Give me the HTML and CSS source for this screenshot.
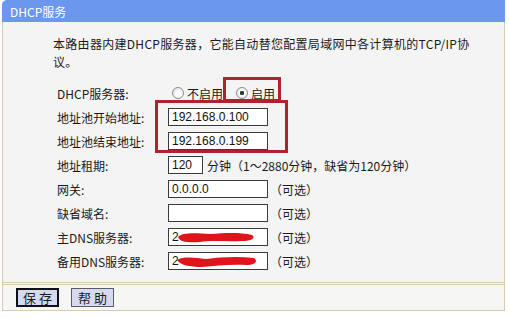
FILE: index.html
```html
<!DOCTYPE html>
<html lang="zh-CN">
<head>
<meta charset="utf-8">
<title>DHCP服务</title>
<link rel="stylesheet" href="styles.css">
</head>
<body>
<div class="panel">
  <div class="titlebar">DHCP服务</div>
  <div class="body">
    <p class="desc">本路由器内建DHCP服务器，它能自动替您配置局域网中各计算机的TCP/IP协<br>议。</p>
    <div class="form">
      <div class="label">DHCP服务器:</div>
      <div class="ctrl">
        <label class="radio"><input type="radio" name="dhcp"><span>不启用</span></label>
        <label class="radio"><input type="radio" name="dhcp" checked><span>启用</span></label>
      </div>
      <div class="label">地址池开始地址:</div>
      <div class="ctrl"><input class="field" type="text" value="192.168.0.100"></div>
      <div class="label">地址池结束地址:</div>
      <div class="ctrl"><input class="field" type="text" value="192.168.0.199"></div>
      <div class="label">地址租期:</div>
      <div class="ctrl"><input class="field short" type="text" value="120"><span class="hint lease">分钟（1～2880分钟，缺省为120分钟）</span></div>
      <div class="label">网关:</div>
      <div class="ctrl"><input class="field" type="text" value="0.0.0.0"><span class="hint">（可选）</span></div>
      <div class="label">缺省域名:</div>
      <div class="ctrl"><input class="field" type="text" value=""><span class="hint">（可选）</span></div>
      <div class="label">主DNS服务器:</div>
      <div class="ctrl"><span class="masked"><input class="field" type="text" value="2"><svg class="scribble" width="80" height="14" viewBox="0 0 80 14"><path d="M2 7 C6 2 20 3 34 4 C48 3 64 2 76 5 C80 8 76 11 66 11 C50 12 36 10 24 12 C12 13 4 12 2 7 Z" fill="#e0151b"/></svg></span><span class="hint">（可选）</span></div>
      <div class="label">备用DNS服务器:</div>
      <div class="ctrl"><span class="masked"><input class="field" type="text" value="2"><svg class="scribble" width="82" height="14" viewBox="0 0 82 14"><path d="M1 6 C8 2 20 4 30 5 C44 3 62 2 78 4 C82 7 80 11 70 11 C54 10 40 12 26 13 C14 13 4 11 1 6 Z" fill="#e0151b"/></svg></span><span class="hint">（可选）</span></div>
    </div>
    <div class="mark mark-enable"></div>
    <div class="mark mark-pool"></div>
  </div>
  <div class="footer">
    <button class="btn focused" type="button">保 存</button>
    <button class="btn" type="button">帮 助</button>
  </div>
</div>
</body>
</html>
```
FILE: styles.css
```css
html, body {
  margin: 0;
  padding: 0;
  background: #ffffff;
}
body {
  font-family: "Noto Sans CJK SC", "Liberation Sans", sans-serif;
  font-size: 12px;
  color: #1a1a1a;
  width: 509px;
  height: 319px;
  overflow: hidden;
}
.panel {
  width: 503px;
  margin-left: 2px;
}
.titlebar {
  height: 22px;
  box-sizing: border-box;
  background: #6b97ee;
  color: #ffffff;
  border-top-left-radius: 5px;
  padding-left: 8px;
  line-height: 23px;
  width: 503px;
  font-size: 12px;
}
.body {
  position: relative;
  background: #f4f4f4;
  border-left: 1px solid #d9ccae;
  border-right: 1px solid #d9ccae;
  padding: 13px 0 9px 50px;
}
.desc {
  margin: 0;
  line-height: 18px;
  white-space: nowrap;
  letter-spacing: 0.3px;
  color: #1a1a1a;
}
.form {
  margin: 10px 0 0 4px;
  display: grid;
  grid-template-columns: 111px auto;
  grid-auto-rows: 24px;
  align-items: center;
}
.label {
  white-space: nowrap;
}
.ctrl {
  display: flex;
  align-items: center;
  white-space: nowrap;
}
.radio {
  display: inline-flex;
  align-items: center;
}
.radio span {
  margin-left: 3px;
}
.radio input {
  appearance: none;
  -webkit-appearance: none;
  width: 12px;
  height: 12px;
  margin: 0 0 0 4px;
  border-radius: 50%;
  border: 1px solid #8c8c8c;
  background: radial-gradient(circle at 60% 60%, #ffffff 30%, #d4d4cf 100%);
  box-sizing: border-box;
}
.radio + .radio input {
  margin-left: 13px;
}
.radio input:checked {
  background: radial-gradient(circle, #1f3b2a 0, #2e4a3a 28%, #ffffff 36%, #dcdcd6 100%);
}
.field {
  box-sizing: border-box;
  width: 100px;
  height: 18px;
  border: 1px solid #3b3b3b;
  background: #ffffff;
  font-family: "Liberation Sans", sans-serif;
  font-size: 12px;
  padding: 0 3px;
  margin: 0;
  color: #111;
}
.field.short {
  width: 35px;
}
.hint {
  margin-left: 2px;
}
.hint.lease {
  margin-left: 4px;
}
.masked {
  position: relative;
  display: inline-block;
  line-height: 0;
}
.scribble {
  position: absolute;
  left: 8px;
  top: 2px;
  filter: blur(0.6px);
}
.mark {
  position: absolute;
  border: 3px solid #b3212c;
  box-sizing: border-box;
}
.mark-enable {
  left: 220px;
  top: 55px;
  width: 58px;
  height: 25px;
}
.mark-pool {
  left: 152px;
  top: 78px;
  width: 133px;
  height: 53px;
}
.footer {
  background: #f6f6f4;
  border-top: 3px double #d9ccae;
  border-left: 1px solid #d9ccae;
  border-right: 1px solid #d9ccae;
  border-bottom: 1px solid #d9ccae;
  padding: 3px 0 3px 13px;
  display: flex;
  gap: 12px;
}
.btn {
  width: 43px;
  height: 19px;
  box-sizing: border-box;
  padding: 0;
  font-family: "Noto Sans CJK SC", sans-serif;
  font-size: 13px;
  line-height: 15px;
  color: #1a1a1a;
  background: #d6daf1;
  border: 1px solid #5a5a6a;
}
.btn.focused {
  border: 2px solid #101018;
}
```
